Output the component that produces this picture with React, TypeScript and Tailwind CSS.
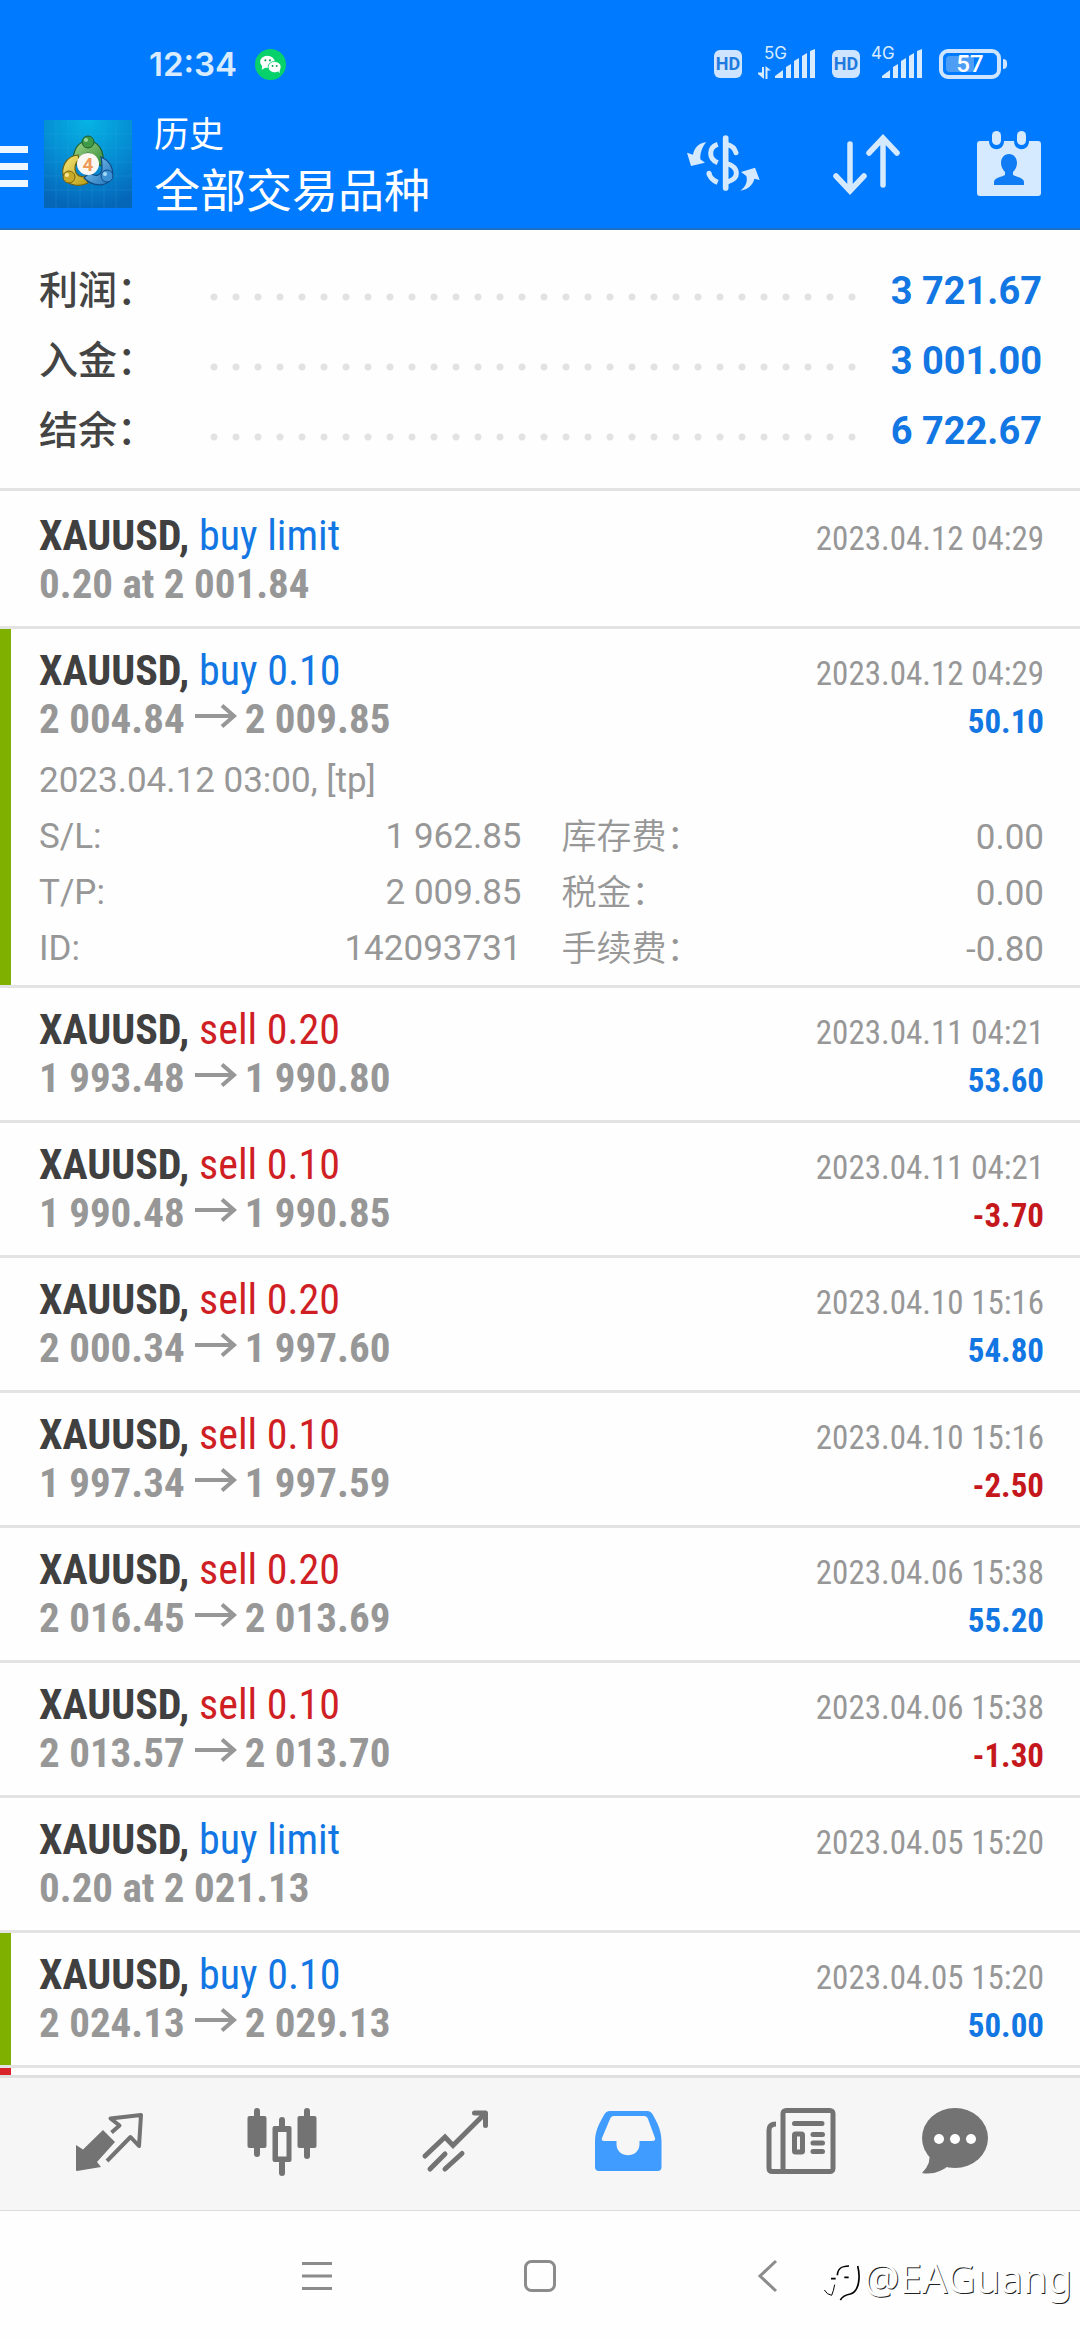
import React from "react";

type Side = "buy" | "sell";

interface Trade {
  side: Side;
  action: string;
  price: string;
  to?: string;
  time: string;
  profit?: string;
  mark?: "green";
  details?: boolean;
}

const summary = [
  { label: "利润：", value: "3 721.67" },
  { label: "入金：", value: "3 001.00" },
  { label: "结余：", value: "6 722.67" },
];

const trades: Trade[] = [
  { side: "buy", action: "buy limit", price: "0.20 at 2 001.84", time: "2023.04.12 04:29" },
  { side: "buy", action: "buy 0.10", price: "2 004.84", to: "2 009.85", time: "2023.04.12 04:29", profit: "50.10", mark: "green", details: true },
  { side: "sell", action: "sell 0.20", price: "1 993.48", to: "1 990.80", time: "2023.04.11 04:21", profit: "53.60" },
  { side: "sell", action: "sell 0.10", price: "1 990.48", to: "1 990.85", time: "2023.04.11 04:21", profit: "-3.70" },
  { side: "sell", action: "sell 0.20", price: "2 000.34", to: "1 997.60", time: "2023.04.10 15:16", profit: "54.80" },
  { side: "sell", action: "sell 0.10", price: "1 997.34", to: "1 997.59", time: "2023.04.10 15:16", profit: "-2.50" },
  { side: "sell", action: "sell 0.20", price: "2 016.45", to: "2 013.69", time: "2023.04.06 15:38", profit: "55.20" },
  { side: "sell", action: "sell 0.10", price: "2 013.57", to: "2 013.70", time: "2023.04.06 15:38", profit: "-1.30" },
  { side: "buy", action: "buy limit", price: "0.20 at 2 021.13", time: "2023.04.05 15:20" },
  { side: "buy", action: "buy 0.10", price: "2 024.13", to: "2 029.13", time: "2023.04.05 15:20", profit: "50.00", mark: "green" },
];

const details = [
  ["S/L:", "1 962.85", "库存费：", "0.00"],
  ["T/P:", "2 009.85", "税金：", "0.00"],
  ["ID:", "142093731", "手续费：", "-0.80"],
];

function HdBadge() {
  return (
    <span className="flex h-7 w-7 items-center justify-center rounded-md bg-[#cfe5ff] font-['Roboto'] text-[18px] leading-none font-bold text-[#1f7ae0]">
      HD
    </span>
  );
}

function Signal({ label, data }: { label: string; data?: boolean }) {
  return (
    <span className="relative block h-8 w-[58px]">
      <span className="absolute top-[-3px] left-[6px] font-['Inter'] text-[17px] leading-none">{label}</span>
      <svg viewBox="0 0 58 32" className="h-8 w-[58px]" fill="currentColor">
        {data && (
          <>
            <path d="M4 19h2v12L0 26v-1.500h4z" />
            <path d="M7.500 31h2V22.500H13L7.500 18z" />
          </>
        )}
        <path d="M17 30v-2l8-6v8z" />
        <path d="M28 30V19l5-3v14z" />
        <path d="M36 30V13l5-3v20z" />
        <path d="M44 30V8l5-3v25z" />
        <path d="M52 30V3l5-2v29z" />
      </svg>
    </span>
  );
}

function StatusBar() {
  return (
    <div className="flex h-[108px] items-center justify-between pt-5 pr-[73px] pl-[149px] text-[#d9ecff]">
      <div className="flex items-center gap-[18px]">
        <span className="font-['Inter'] text-[33px] leading-none font-semibold">12:34</span>
        <svg viewBox="0 0 30 30" className="h-[31px] w-[31px]" aria-label="WeChat">
          <circle cx="15" cy="15" r="15" fill="#07d16a" />
          <ellipse cx="12" cy="12.500" rx="7" ry="6" fill="#fff" />
          <path d="M7 16l-.5 4 4-2z" fill="#fff" />
          <ellipse cx="19" cy="17.500" rx="6.300" ry="5.500" fill="#fff" stroke="#07d16a" strokeWidth=".8" />
          <path d="M22 21l2 2.500-.2-4z" fill="#fff" />
          <circle cx="10" cy="11" r="1" fill="#07a050" />
          <circle cx="14.500" cy="11" r="1" fill="#07a050" />
          <circle cx="17" cy="16.500" r=".9" fill="#07a050" />
          <circle cx="21" cy="16.500" r=".9" fill="#07a050" />
        </svg>
      </div>
      <div className="flex items-center gap-4">
        <HdBadge />
        <Signal label="5G" data />
        <div className="flex items-center gap-[5px]">
          <HdBadge />
          <Signal label="4G" />
        </div>
        <span className="flex items-center gap-[2px]">
          <span className="relative flex h-[30px] w-[62px] items-center justify-center rounded-[9px] border-4 border-[#cfe5ff]">
            <span className="absolute inset-y-[3px] left-[3px] w-7 rounded-sm bg-[#4d9df5]" />
            <span className="relative font-['Roboto'] text-[24px] leading-none font-medium text-white">57</span>
          </span>
          <span className="h-[10px] w-1 rounded-r bg-[#cfe5ff]" />
        </span>
      </div>
    </div>
  );
}

function AppLogo() {
  return (
    <svg viewBox="0 0 88 88" className="h-[88px] w-[88px] shrink-0" aria-label="MetaTrader 4">
      <defs>
        <radialGradient id="bg" cx=".5" cy="0" r="1">
          <stop offset="0" stopColor="#06b4e4" />
          <stop offset=".55" stopColor="#058bd2" />
          <stop offset="1" stopColor="#0566b8" />
        </radialGradient>
        <linearGradient id="gr" x1="0" y1="0" x2="1" y2="1">
          <stop offset="0" stopColor="#a5d88a" />
          <stop offset="1" stopColor="#2f8a35" />
        </linearGradient>
        <linearGradient id="ye" x1="0" y1="0" x2="1" y2="1">
          <stop offset="0" stopColor="#f8ea7c" />
          <stop offset="1" stopColor="#b99b13" />
        </linearGradient>
        <linearGradient id="bl" x1="0" y1="0" x2="1" y2="1">
          <stop offset="0" stopColor="#8ccdf5" />
          <stop offset="1" stopColor="#1b6fb8" />
        </linearGradient>
      </defs>
      <rect width="88" height="88" fill="url(#bg)" />
      <path d="M12 0v88M24 0v88M36 0v88M48 0v88M60 0v88M72 0v88M0 14h88M0 28h88M0 42h88M0 56h88M0 70h88" stroke="#3ab5ee" strokeOpacity=".18" />
      <path d="M29 46C28 30 34 21 44 21s17 9 15 25l-7-2c-1-8-4-11-8-11s-8 3-9 11z" fill="url(#gr)" stroke="#1d5c2a" strokeWidth="1.200" />
      <path d="M34 35C22 36 16 48 20 58c4 8 16 9 24 5l-3-7c-6 2-10-2-10-8 0-4 1-6 4-8z" fill="url(#ye)" stroke="#6f6212" strokeWidth="1.200" />
      <path d="M57 37c10 4 14 14 10 22-5 8-18 8-27-1l5-5c7 4 12 3 13-4 0-4 0-8-1-12z" fill="url(#bl)" stroke="#114c86" strokeWidth="1.200" />
      <circle cx="44" cy="22" r="6" fill="#3f9a48" stroke="#1d5c2a" />
      <circle cx="42" cy="20" r="2" fill="#9ad69c" />
      <circle cx="25" cy="57" r="6" fill="#c9a928" stroke="#6f6212" />
      <circle cx="23" cy="55" r="2" fill="#f6ea95" />
      <circle cx="63" cy="56" r="6" fill="#3b91d3" stroke="#114c86" />
      <circle cx="61" cy="54" r="2" fill="#a5daf7" />
      <circle cx="44" cy="44" r="11" fill="#fbf7f2" />
      <text x="44" y="51" textAnchor="middle" fontSize="19" fontWeight="700" fontFamily="Roboto" fill="#ee9a58">4</text>
    </svg>
  );
}

function AppBar() {
  return (
    <div className="flex h-[122px] items-center border-b-2 border-[#1b6fc4] pb-2 text-[#d5e9ff]">
      <button aria-label="菜单" className="mr-4 shrink-0">
        <svg viewBox="0 0 28 88" className="h-[88px] w-7" fill="#eef7ff">
          <path d="M0 26h28v7H0zM0 43h28v7H0zM0 60h28v7H0z" />
        </svg>
      </button>
      <AppLogo />
      <h1 className="ml-[22px] flex-1 pb-[6px] font-['Noto_Sans_CJK_SC',sans-serif] font-normal text-white">
        <span className="block text-[35px] leading-[52px]">历史</span>
        <span className="block text-[46px] leading-[58px]">全部交易品种</span>
      </h1>
      <button aria-label="交易品种" className="flex w-[143px] justify-center">
        <svg viewBox="0 0 252 264" className="h-[88px] w-[84px]" fill="none" stroke="currentColor" strokeWidth="15">
          <path d="M134 54v150" strokeLinecap="round" strokeWidth="17" />
          <path d="M138 73Q159 78 165 98" strokeLinecap="round" />
          <path d="M136 130C176 142 176 176 138 186" />
          <path d="M110 73C82 82 82 116 110 128" />
          <path d="M84 160Q88 178 110 187" />
          <path d="M84 160v1" strokeLinecap="round" />
          <path stroke="none" fill="currentColor" d="M76 66C52 70 40 84 36 104L18 98L30 138L72 128L58 118C57 98 64 80 76 66Z" />
          <path stroke="none" fill="currentColor" d="M178 212C196 200 200 182 196 168L180 156L222 143L236 180L220 176C216 194 202 208 178 212Z" />
        </svg>
      </button>
      <button aria-label="排序" className="flex w-[143px] justify-center">
        <svg viewBox="0 0 84 88" className="h-[88px] w-[84px]" fill="none" stroke="currentColor" strokeWidth="5.500" strokeLinecap="round">
          <path d="M26 24v46M12 56l14 15 14-15" />
          <path d="M59 65V18M45 33l14-15 14 15" />
        </svg>
      </button>
      <button aria-label="期间" className="flex w-[143px] justify-center">
        <svg viewBox="0 0 84 88" className="h-[88px] w-[84px]" fill="currentColor">
          <path d="M13 21h9c0 11 15 11 15 0h10c0 11 15 11 15 0h9q3 0 3 3v49q0 3-3 3H13q-3 0-3-3V24q0-3 3-3z" />
          <rect x="25" y="11" width="9" height="14" rx="4.500" />
          <rect x="50" y="11" width="9" height="14" rx="4.500" />
          <path fill="#0f7cf5" d="M42 34c5 0 8 4 8 9 0 4-2 7-4 9v3c4 2 11 3 11 7v3H27v-3c0-4 7-5 11-7v-3c-2-2-4-5-4-9 0-5 3-9 8-9z" />
        </svg>
      </button>
    </div>
  );
}

function Summary() {
  return (
    <dl className="border-b-[3px] border-[#e3e3e3] pt-7 pr-[38px] pb-5 pl-[39px]">
      {summary.map((row) => (
        <div key={row.label} className="flex h-[70px] items-baseline">
          <dt className="w-[164px] font-['Noto_Sans_CJK_SC',sans-serif] text-[39px] leading-[58px] font-medium text-[#444]">{row.label}</dt>
          <div className="mt-[35px] h-2 flex-1 self-start bg-[radial-gradient(circle,#e2e2e2_3px,transparent_4px)] bg-[length:22px_8px] bg-repeat-x" />
          <dd className="w-[179px] text-right font-['Roboto'] text-[38px] leading-[66px] font-bold text-[#1276e3]">{row.value}</dd>
        </div>
      ))}
    </dl>
  );
}

function PriceArrow() {
  return (
    <svg viewBox="0 0 42 24" className="mr-2 mb-[5px] ml-[10px] inline-block h-6 w-[42px] align-baseline" fill="none" stroke="currentColor" strokeWidth="4" role="img" aria-label="→">
      <path d="M0 12h38M27 1.500L39 12 27 22.500" />
    </svg>
  );
}

function TradeRow({ trade }: { trade: Trade }) {
  return (
    <li className="relative border-b-[3px] border-[#e3e3e3] pt-[18px] pr-9 pb-[18px] pl-[39px] font-['Roboto_Condensed','Noto_Sans_CJK_SC',sans-serif] has-[dl]:pb-2">
      {trade.mark && <span className="absolute inset-y-0 left-0 w-[11px] bg-[#7fb000]" />}
      <div className="flex h-12 items-baseline justify-between leading-[48px]">
        <span className="text-[42px] font-bold text-[#404040]">
          XAUUSD,{" "}
          <span className={trade.side === "buy" ? "font-normal text-[#1276e3]" : "font-normal text-[#d01f24]"}>{trade.action}</span>
        </span>
        <time className="text-[33px] text-[#979797]">{trade.time}</time>
      </div>
      <div className="flex h-12 items-baseline justify-between leading-[48px]">
        <span className="text-[41px] font-bold text-[#979797]">
          {trade.price}
          {trade.to && (
            <>
              <PriceArrow />
              {trade.to}
            </>
          )}
        </span>
        {trade.profit && (
          <span className={trade.profit.startsWith("-") ? "text-[33px] font-bold text-[#c4181d]" : "text-[33px] font-bold text-[#1276e3]"}>
            {trade.profit}
          </span>
        )}
      </div>
      {trade.details && (
        <dl className="mt-[10px] font-['Roboto','Noto_Sans_CJK_SC',sans-serif] text-[35px] leading-[56px] text-[#979797]">
          <div>2023.04.12 03:00, [tp]</div>
          {details.map(([a, b, c, d]) => (
            <div key={a} className="grid h-14 grid-cols-2 gap-x-10">
              <div className="flex items-baseline justify-between">
                <dt>{a}</dt>
                <dd>{b}</dd>
              </div>
              <div className="flex items-baseline justify-between">
                <dt className="font-['Noto_Sans_CJK_SC',sans-serif] leading-[50px] font-[350]">{c}</dt>
                <dd>{d}</dd>
              </div>
            </div>
          ))}
        </dl>
      )}
    </li>
  );
}

function TabBar() {
  return (
    <nav className="grid h-[136px] shrink-0 grid-cols-[repeat(5,173fr)_135fr] items-center border-t-[3px] border-b border-t-[#e0e0e0] border-b-[#dcdcdc] bg-[#f6f6f6] pr-[58px] pl-[22px] text-[#737373]">
      <button aria-label="行情" className="flex justify-center">
        <svg viewBox="0 0 84 84" className="h-[84px] w-[84px]">
          <path fill="currentColor" d="M9 43l7 4.500L36 28l12 12-18 20 4 5-24 4q-1 0-1-1z" />
          <path fill="none" stroke="currentColor" strokeWidth="4" strokeLinejoin="round" d="M44.500 30.500l8-7-9-7L74 13l-2 31-8.500-9L40 59" />
        </svg>
      </button>
      <button aria-label="图表" className="flex justify-center">
        <svg viewBox="0 0 84 84" className="h-[84px] w-[84px]" fill="currentColor">
          <rect x="14" y="6" width="6" height="49" rx="3" />
          <rect x="7.500" y="14" width="19" height="32" rx="2" />
          <rect x="64" y="6" width="6" height="51" rx="3" />
          <rect x="57.500" y="14" width="19" height="32" rx="2" />
          <rect x="39" y="15" width="6" height="12" rx="3" />
          <rect x="39" y="58" width="6" height="16" rx="3" />
          <path fillRule="evenodd" d="M34.500 24h15q2 0 2 2v32q0 2-2 2h-15q-2 0-2-2V26q0-2 2-2zM38 30v24.500h8.500V30z" />
        </svg>
      </button>
      <button aria-label="交易" className="flex justify-center">
        <svg viewBox="0 0 84 84" className="h-[84px] w-[84px]" fill="none" stroke="currentColor" strokeWidth="5" strokeLinecap="round">
          <path d="M12 54l20-19 8 8.500 32-32" strokeLinejoin="miter" />
          <path d="M61.500 11H72.500V23.500" strokeLinejoin="round" />
          <path d="M17 67l15-15M32 67l17-15.500" />
        </svg>
      </button>
      <button aria-label="历史" className="flex justify-center text-[#409cff]">
        <svg viewBox="0 0 84 84" className="h-[84px] w-[84px]" fill="currentColor">
          <path fillRule="evenodd" d="M24 9h37q4 0 6 4c5 9 8.500 16 8.500 27v25q0 4-4 4H13q-4 0-4-4V40c0-11 4-18 9-27q2-4 6-4zM28 14q-3 0-4 3l-8 19q-1 3 2 3h12.500v3c0 15 23 15 23 0v-3H66q4 0 3-3l-7-19q-1-3-4-3z" />
        </svg>
      </button>
      <button aria-label="新闻" className="flex justify-center">
        <svg viewBox="0 0 84 84" className="h-[84px] w-[84px]" fill="none" stroke="currentColor" strokeWidth="5" strokeLinecap="round">
          <rect x="24" y="8.500" width="50" height="61" rx="3" />
          <path strokeLinecap="butt" d="M17 22q-7 0-7 6v38q0 3.500 3.500 3.500H26" />
          <path d="M35.500 21.500H63M54 32.500h9.500M54 41h9.500M54 49.500h9.500" />
          <rect x="35.500" y="32" width="8" height="18" rx="1" />
        </svg>
      </button>
      <button aria-label="聊天" className="flex justify-center">
        <svg viewBox="0 0 84 84" className="h-[84px] w-[84px]">
          <ellipse cx="42" cy="36" rx="33" ry="30" fill="currentColor" />
          <path fill="currentColor" d="M16 50q3 11-7 21c11 2 21-2 27-8z" />
          <circle cx="26" cy="37" r="5" fill="#fff" />
          <circle cx="42" cy="37" r="5" fill="#fff" />
          <circle cx="58" cy="37" r="5" fill="#fff" />
        </svg>
      </button>
    </nav>
  );
}

function SystemNav() {
  return (
    <div className="relative flex h-[129px] shrink-0 items-center justify-center gap-[190px] bg-[#fefefe] text-[#8c8c8c]">
      <button aria-label="最近任务">
        <svg viewBox="0 0 32 34" className="h-[34px] w-8" stroke="currentColor" strokeWidth="3">
          <path d="M1 4.500h30M1 17h30M1 29.500h30" />
        </svg>
      </button>
      <button aria-label="主屏幕">
        <svg viewBox="0 0 34 34" className="h-[34px] w-[34px]" fill="none" stroke="currentColor" strokeWidth="3">
          <rect x="2.500" y="2.500" width="29" height="29" rx="6" />
        </svg>
      </button>
      <button aria-label="返回">
        <svg viewBox="0 0 32 34" className="h-[34px] w-8" fill="none" stroke="currentColor" strokeWidth="3">
          <path d="M29 2L13 17l16 15" />
        </svg>
      </button>
      <div className="absolute right-2 bottom-[34px] flex items-center">
        <svg viewBox="0 0 120 126" className="h-[42px] w-10 overflow-visible" fill="none" stroke="#000">
          <path strokeWidth="5" d="M24 65h14M43 55C44 35 54 27 78 27M64 61h13" />
          <path strokeWidth="3" d="M35 83Q32 101 26 115Q12 113 4 99" />
          <path strokeWidth="5" d="M104 27C112 57 110 103 82 111Q60 115 52 129" />
        </svg>
        <span className="font-['Noto_Sans'] text-[40px] leading-[56px] text-white [text-shadow:1px_1px_0_#222]">@EAGuang</span>
      </div>
    </div>
  );
}

export default function App() {
  return (
    <div className="flex h-screen flex-col overflow-hidden bg-[#fefefe]">
      <header className="shrink-0 bg-[#007aff]">
        <StatusBar />
        <AppBar />
      </header>
      <main className="min-h-0 flex-1 overflow-hidden">
        <Summary />
        <ul className="pt-[3px]">
          {trades.map((trade, i) => (
            <TradeRow key={i} trade={trade} />
          ))}
          <li className="h-32 border-l-[11px] border-[#d8232a]" />
        </ul>
      </main>
      <TabBar />
      <SystemNav />
    </div>
  );
}
